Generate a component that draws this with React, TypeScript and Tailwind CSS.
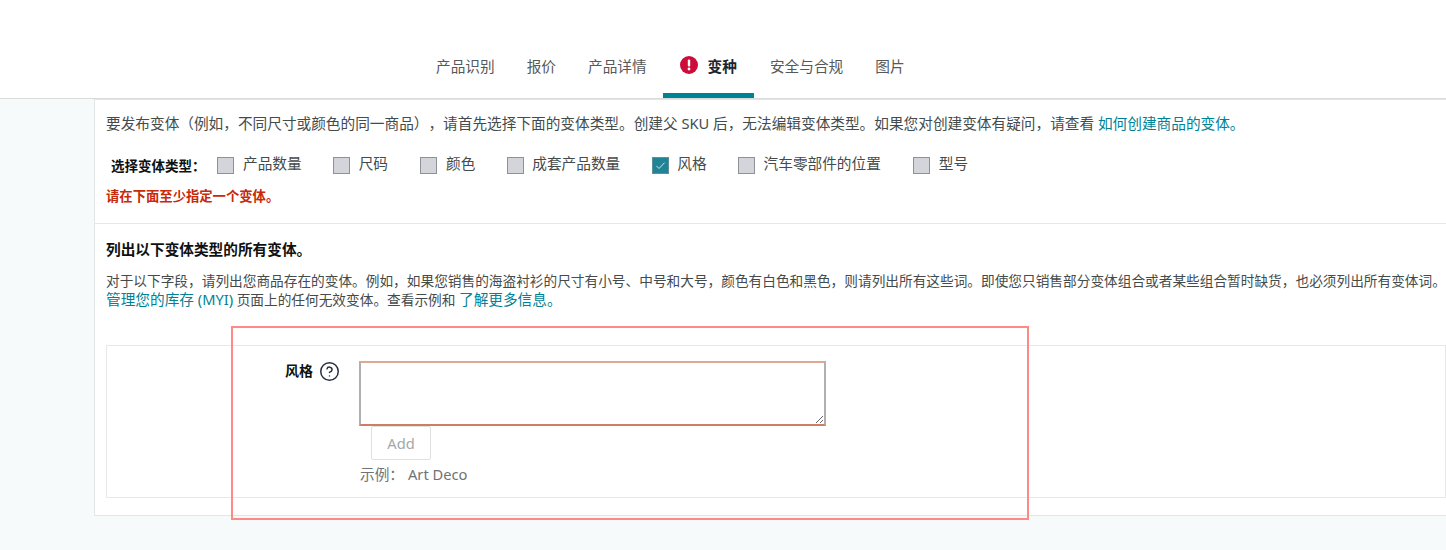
import React from "react";
import { CircleHelp } from "lucide-react";

const tabs = [
  { label: "产品识别" },
  { label: "报价" },
  { label: "产品详情" },
  { label: "变种", active: true },
  { label: "安全与合规" },
  { label: "图片" },
];

const variationTypes = [
  { label: "产品数量", gap: "mr-[31px]", labelGap: "gap-[9px]" },
  { label: "尺码", gap: "mr-[32px]", labelGap: "gap-[9px]" },
  { label: "颜色", gap: "mr-[32px]", labelGap: "gap-[9px]" },
  { label: "成套产品数量", gap: "mr-[32px]", labelGap: "gap-[8px]" },
  { label: "风格", checked: true, gap: "mr-[31px]", labelGap: "gap-[8px]" },
  { label: "汽车零部件的位置", gap: "mr-[32px]", labelGap: "gap-[9px]" },
  { label: "型号", gap: "", labelGap: "gap-[9px]" },
];

function Checkbox({ checked }: { checked?: boolean }) {
  if (checked) {
    return (
      <span className="flex h-[17px] w-[17px] shrink-0 items-center justify-center border border-[#5f8f9b] bg-[#1f8496]">
        <svg viewBox="0 0 16 16" className="h-[13px] w-[13px]" fill="none">
          <path d="M3 8.5l3.2 3.2L13 4.5" stroke="#d7e8ec" strokeWidth="1.2" />
        </svg>
      </span>
    );
  }
  return <span className="h-[17px] w-[17px] shrink-0 border border-[#8e9196] bg-[#d3d5da]" />;
}

export default function App() {
  return (
    <div
      className="relative h-[550px] w-full overflow-hidden bg-[#f7fafa] text-[14.67px] leading-[20px] text-[#444b4b] [text-spacing-trim:space-all]"
      style={{ fontFamily: '"Noto Sans", "Noto Sans CJK SC", sans-serif' }}
    >
      <header className="flex h-[99px] items-end border-b border-[#d9dbdb] bg-white pl-[420px]">
        {tabs.map((tab) => (
          <div
            key={tab.label}
            className={
              tab.active
                ? "flex h-[59px] items-center gap-[10px] border-b-[5px] border-[#008296] pl-[17px] pr-[17px] font-bold text-[#1b2530]"
                : "flex h-[59px] items-center px-4 pb-[5px] text-[#565959]"
            }
          >
            {tab.active && (
              <svg viewBox="0 0 18 18" className="h-[18px] w-[18px] -translate-y-px">
                <circle cx="9" cy="9" r="9" fill="#cc0c39" />
                <rect x="7.8" y="3.6" width="2.4" height="7" rx="1" fill="#fff" />
                <circle cx="9" cy="13" r="1.4" fill="#fff" />
              </svg>
            )}
            {tab.label}
          </div>
        ))}
      </header>

      <main className="ml-[94px] h-[417px] w-[1400px] border border-[#e3e6e6] bg-white">
        <section className="h-[124px] border-b border-[#e7e9e9] pl-[11px] pt-[13px]">
          <p className="whitespace-nowrap">
            要发布变体（例如，不同尺寸或颜色的同一商品），请首先选择下面的变体类型。创建父 SKU 后，无法编辑变体类型。如果您对创建变体有疑问，请查看{" "}
            <a className="text-[#008296]">如何创建商品的变体。</a>
          </p>
          <div className="mt-[21px] flex items-center pl-[5px]">
            <span className="mr-[16px] mt-[2px] w-[90px] whitespace-nowrap text-[13.5px] font-bold text-[#0f1111]">选择变体类型：</span>
            {variationTypes.map((type) => (
              <label key={type.label} className={`flex items-center ${type.labelGap} ${type.gap}`}>
                <Checkbox checked={type.checked} />
                <span className="-mt-[5px] whitespace-nowrap">{type.label}</span>
              </label>
            ))}
          </div>
          <p className="mt-[10px] text-[13.33px] font-bold text-[#c7290b]">请在下面至少指定一个变体。</p>
        </section>

        <section className="pl-[11px] pt-[15px]">
          <h2 className="font-bold text-[#0f1111]">列出以下变体类型的所有变体。</h2>
          <p className="mt-[12px] whitespace-nowrap text-[13.68px] leading-[19px]">
            对于以下字段，请列出您商品存在的变体。例如，如果您销售的海盗衬衫的尺寸有小号、中号和大号，颜色有白色和黑色，则请列出所有这些词。即使您只销售部分变体组合或者某些组合暂时缺货，也必须列出所有变体词。
          </p>
          <p className="whitespace-nowrap text-[13.68px] leading-[19px]">
            <a className="text-[14.67px] text-[#008296]">管理您的库存 (MYI)</a> 页面上的任何无效变体。查看示例和 <a className="text-[14.67px] text-[#008296]">了解更多信息。</a>
          </p>

          <div className="mt-[36px] flex h-[153px] w-[1340px] border border-[#e7e9e9] pl-[178px] pt-[16px]">
            <div className="-mt-px flex h-[20px] w-[75px] shrink-0 items-center gap-[6px] text-[14px]">
              <span className="font-bold text-[#0f1111]">风格</span>
              <CircleHelp size={21} strokeWidth={1.7} className="text-[#232f3e]" />
            </div>
            <div>
              <textarea className="-ml-px -mt-px block h-[65px] w-[467px] border-2 border-x-[#b0b0b0] border-t-[#dea897] border-b-[#cf7d63] bg-white outline-none" />
              <button className="ml-[11px] block h-[34px] w-[60px] rounded-[2px] border border-[#dfe1e1] bg-white pb-[1px] text-[#a5a8a8]">Add</button>
              <p className="mt-[4px] whitespace-nowrap text-[#6f7373]">示例：<span className="ml-[4px]">Art Deco</span></p>
            </div>
          </div>
        </section>
      </main>

      {/* annotation drawn over the screenshot */}
      <div className="pointer-events-none absolute left-[231px] top-[326px] h-[194px] w-[798px] border-2 border-[#ff8a85]" />
    </div>
  );
}
